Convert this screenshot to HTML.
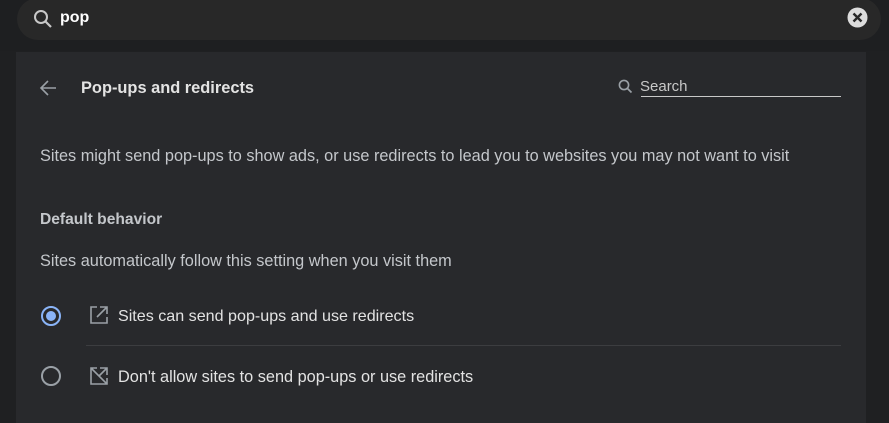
<!DOCTYPE html>
<html><head><style>
body{margin:0;width:889px;height:423px;background:#1f2022;font-family:"Liberation Sans",sans-serif;overflow:hidden;position:relative;color:#e8eaed}
.top{position:absolute;left:0;top:0;width:889px;height:51px;background:#1e1f21}
.pill{position:absolute;left:17px;top:-2px;width:864px;height:42px;background:#282828;border-radius:21px}
.card{position:absolute;left:16px;top:52px;width:850px;height:371px;background:#28292c}
.t{position:absolute;white-space:nowrap}
</style></head><body>
<div class="top"></div>
<div class="pill"></div>
<svg style="position:absolute;left:32px;top:8px" width="22" height="22" viewBox="0 0 22 22"><circle cx="9" cy="9" r="6" fill="none" stroke="#c8c8c8" stroke-width="2"/><path d="M13.5 13.5L19 19" stroke="#c8c8c8" stroke-width="2.2"/></svg>
<div class="t" style="left:60px;top:9px;font-size:16px;font-weight:bold;color:#fff">pop</div>
<svg style="position:absolute;left:847px;top:7px" width="21" height="21" viewBox="0 0 21 21"><circle cx="10.5" cy="10.5" r="10" fill="#dcdcdc"/><path d="M6.5 6.5L14.5 14.5M14.5 6.5L6.5 14.5" stroke="#282828" stroke-width="2.4"/></svg>
<div class="card"></div>
<svg style="position:absolute;left:38px;top:78px" width="20" height="20" viewBox="0 0 20 20"><path d="M18 10H3M10 3L3 10L10 17" fill="none" stroke="#9aa0a6" stroke-width="1.6"/></svg>
<div class="t" style="left:81px;top:79px;font-size:16.4px;font-weight:bold;color:#e3e3e3">Pop-ups and redirects</div>
<svg style="position:absolute;left:617px;top:78px" width="18" height="18" viewBox="0 0 18 18"><circle cx="7" cy="7" r="4.6" fill="none" stroke="#9aa0a6" stroke-width="1.6"/><path d="M10.5 10.5L14.5 14.5" stroke="#9aa0a6" stroke-width="1.7"/></svg>
<div class="t" style="left:640px;top:78px;font-size:15px;color:#c8c8c8">Search</div>
<div style="position:absolute;left:641px;top:96px;width:200px;height:1px;background:#c8c8c8"></div>
<div class="t" style="left:40px;top:147px;font-size:16.3px;color:#c4c7cb">Sites might send pop-ups to show ads, or use redirects to lead you to websites you may not want to visit</div>
<div class="t" style="left:40px;top:211px;font-size:15.6px;font-weight:bold;color:#c4c7cb">Default behavior</div>
<div class="t" style="left:40px;top:252px;font-size:16.3px;color:#c4c7cb">Sites automatically follow this setting when you visit them</div>
<svg style="position:absolute;left:40px;top:305px" width="22" height="22" viewBox="0 0 22 22"><circle cx="11" cy="11" r="9" fill="none" stroke="#8ab4f8" stroke-width="2"/><circle cx="11" cy="11" r="5" fill="#8ab4f8"/></svg>
<svg style="position:absolute;left:89px;top:305px" width="20" height="20" viewBox="0 0 20 20"><path d="M8 2H2V18H18V12M11 2H18V9M18 2L8 12" fill="none" stroke="#9aa0a6" stroke-width="1.6"/></svg>
<div class="t" style="left:118px;top:307px;font-size:16.1px;color:#e3e3e3">Sites can send pop-ups and use redirects</div>
<div style="position:absolute;left:86px;top:345px;width:755px;height:1px;background:#3c3d40"></div>
<svg style="position:absolute;left:40px;top:365px" width="22" height="22" viewBox="0 0 22 22"><circle cx="11" cy="11" r="9" fill="none" stroke="#9aa0a6" stroke-width="2"/></svg>
<svg style="position:absolute;left:89px;top:366px" width="20" height="20" viewBox="0 0 20 20"><path d="M8 2H2V18H18V12M11 2H18V9M18 2L10 10M2 2L18 18" fill="none" stroke="#9aa0a6" stroke-width="1.6"/></svg>
<div class="t" style="left:118px;top:368px;font-size:16.3px;color:#e3e3e3">Don't allow sites to send pop-ups or use redirects</div>
</body></html>
